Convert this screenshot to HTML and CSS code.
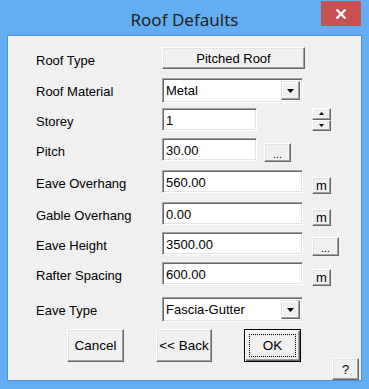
FILE: index.html
```html
<!DOCTYPE html>
<html lang="en">
<head>
    <meta charset="UTF-8">
    <meta name="viewport" content="width=device-width, initial-scale=1.0">
    <title>Roof Defaults</title>
    <link rel="stylesheet" href="styles.css">
</head>
<body>
    <div class="window">
        <div class="titlebar">
            <span></span>
            <span class="title">Roof Defaults</span>
            <button class="close-btn" aria-label="Close">
                <svg width="12" height="10" viewBox="0 0 12 10"><path d="M1.5 0.5 L10.5 9.5 M10.5 0.5 L1.5 9.5" stroke="#fff" stroke-width="2.3" fill="none"/></svg>
            </button>
        </div>

        <div class="client">
            <div class="form-grid">
                <label>Roof Type</label>
                <div class="field"><button class="btn btn-wide">Pitched Roof</button></div>
                <div class="side"></div>

                <label>Roof Material</label>
                <div class="field">
                    <div class="combo">
                        <span class="combo-text">Metal</span>
                        <span class="combo-btn"><svg width="7" height="4" viewBox="0 0 7 4"><path d="M0 0h7l-3.5 4z" fill="#000"/></svg></span>
                    </div>
                </div>
                <div class="side"></div>

                <label>Storey</label>
                <div class="field"><input class="input input-short" type="text" value="1"></div>
                <div class="side">
                    <div class="spinner">
                        <span class="spin-btn"><svg width="5" height="3" viewBox="0 0 5 3"><path d="M2.5 0L5 3H0z" fill="#000"/></svg></span>
                        <span class="spin-btn"><svg width="5" height="3" viewBox="0 0 5 3"><path d="M0 0h5L2.5 3z" fill="#000"/></svg></span>
                    </div>
                </div>

                <label>Pitch</label>
                <div class="field">
                    <input class="input input-short" type="text" value="30.00">
                    <button class="btn btn-dots btn-inline">...</button>
                </div>
                <div class="side"></div>

                <label>Eave Overhang</label>
                <div class="field"><input class="input input-long" type="text" value="560.00"></div>
                <div class="side"><button class="btn btn-m">m</button></div>

                <label>Gable Overhang</label>
                <div class="field"><input class="input input-long" type="text" value="0.00"></div>
                <div class="side"><button class="btn btn-m">m</button></div>

                <label>Eave Height</label>
                <div class="field"><input class="input input-long" type="text" value="3500.00"></div>
                <div class="side"><button class="btn btn-dots">...</button></div>

                <label>Rafter Spacing</label>
                <div class="field"><input class="input input-long" type="text" value="600.00"></div>
                <div class="side"><button class="btn btn-m">m</button></div>

                <label>Eave Type</label>
                <div class="field">
                    <div class="combo">
                        <span class="combo-text">Fascia-Gutter</span>
                        <span class="combo-btn"><svg width="7" height="4" viewBox="0 0 7 4"><path d="M0 0h7l-3.5 4z" fill="#000"/></svg></span>
                    </div>
                </div>
                <div class="side"></div>
            </div>

            <div class="actions">
                <button class="btn btn-action">Cancel</button>
                <button class="btn btn-action btn-back">&lt;&lt; Back</button>
                <button class="btn btn-action btn-default">OK</button>
                <button class="btn btn-help">?</button>
            </div>
        </div>
    </div>
</body>
</html>
```

FILE: styles.css
```css
* {
    box-sizing: border-box;
}
body {
    margin: 0;
    font-family: "Liberation Sans", Arial, sans-serif;
    font-size: 13px;
    color: #000;
    background-color: #63adf2;
}
.window {
    width: 369px;
    height: 389px;
    background-color: #63adf2;
    padding: 0 7px 8px;
    display: flex;
    flex-direction: column;
}
.titlebar {
    height: 35px;
    display: grid;
    grid-template-columns: 41px 1fr 41px;
}
.title {
    font-family: "Noto Sans", sans-serif;
    font-size: 17px;
    line-height: 33px;
    padding-top: 3px;
    text-align: center;
    color: #222;
}
.close-btn {
    width: 40px;
    height: 25px;
    margin-top: 1px;
    background-color: #c75050;
    border: none;
    padding: 0;
    display: flex;
    align-items: center;
    justify-content: center;
}
.client {
    flex: 1;
    background-color: #f0f0f0;
    border: 1px solid #4b90d8;
    padding-top: 11px;
}
.form-grid {
    display: grid;
    padding-left: 28px;
    grid-template-columns: 126px 150px 27px;
    grid-template-rows: 31px 30px 30px 32px 32px 30px 30px 35px 32px;
    align-items: start;
}
.form-grid label {
    padding-top: 6px;
    line-height: 16px;
}
.field {
    display: flex;
    align-items: flex-start;
}
.btn {
    background-color: #f0f0f0;
    border: 1px solid;
    border-color: #fff #696969 #696969 #fff;
    box-shadow: inset -1px -1px #a0a0a0, inset 1px 1px #e3e3e3;
    font-family: inherit;
    font-size: 13px;
    color: #000;
    padding: 0;
}
.btn-wide {
    width: 143px;
    height: 22px;
}
.input {
    height: 23px;
    border: 1px solid;
    border-color: #a0a0a0 #fff #fff #a0a0a0;
    box-shadow: inset 1px 1px #696969, inset -1px -1px #e3e3e3;
    background-color: #fff;
    font-family: inherit;
    font-size: 13px;
    padding: 1px 3px 0;
    color: #000;
}
.input-short {
    width: 95px;
}
.input-long {
    width: 141px;
}
.combo {
    width: 141px;
    height: 25px;
    display: flex;
    align-items: center;
    border: 1px solid;
    border-color: #a0a0a0 #fff #fff #a0a0a0;
    box-shadow: inset 1px 1px #696969, inset -1px -1px #e3e3e3;
    background-color: #fff;
    padding: 2px 2px 2px 3px;
}
.combo-text {
    flex: 1;
}
.combo-btn {
    width: 19px;
    height: 100%;
    display: flex;
    align-items: center;
    justify-content: center;
    background-color: #f0f0f0;
    border: 1px solid;
    border-color: #e3e3e3 #696969 #696969 #e3e3e3;
    box-shadow: inset -1px -1px #a0a0a0, inset 1px 1px #fff;
}
.spinner {
    width: 19px;
    height: 23px;
    display: flex;
    flex-direction: column;
}
.spin-btn {
    flex: 1;
    display: flex;
    align-items: center;
    justify-content: center;
    background-color: #f0f0f0;
    border: 1px solid;
    border-color: #fff #696969 #696969 #fff;
    box-shadow: inset -1px -1px #a0a0a0;
}
.btn-m {
    width: 19px;
    height: 17px;
    margin-top: 7px;
    line-height: 13px;
}
.btn-dots {
    width: 27px;
    height: 19px;
    margin-top: 5px;
    font-size: 11px;
    line-height: 11px;
    padding-top: 4px;
}
.btn-inline {
    margin-left: 7px;
}
.actions {
    display: flex;
    height: 51px;
    padding-left: 59px;
}
.btn-action {
    width: 57px;
    height: 33px;
    margin-right: 32px;
    font-size: 13.5px;
}
.btn-back {
    width: 56px;
}
.btn-default {
    margin-right: 0;
    border-color: #000;
    box-shadow: inset 1px 1px #fff, inset -1px -1px #696969, inset -2px -2px #a0a0a0;
    outline: 1px dotted #000;
    outline-offset: -6px;
}
.btn-help {
    width: 27px;
    height: 22px;
    margin-left: auto;
    margin-right: 2px;
    align-self: flex-end;
}
```
